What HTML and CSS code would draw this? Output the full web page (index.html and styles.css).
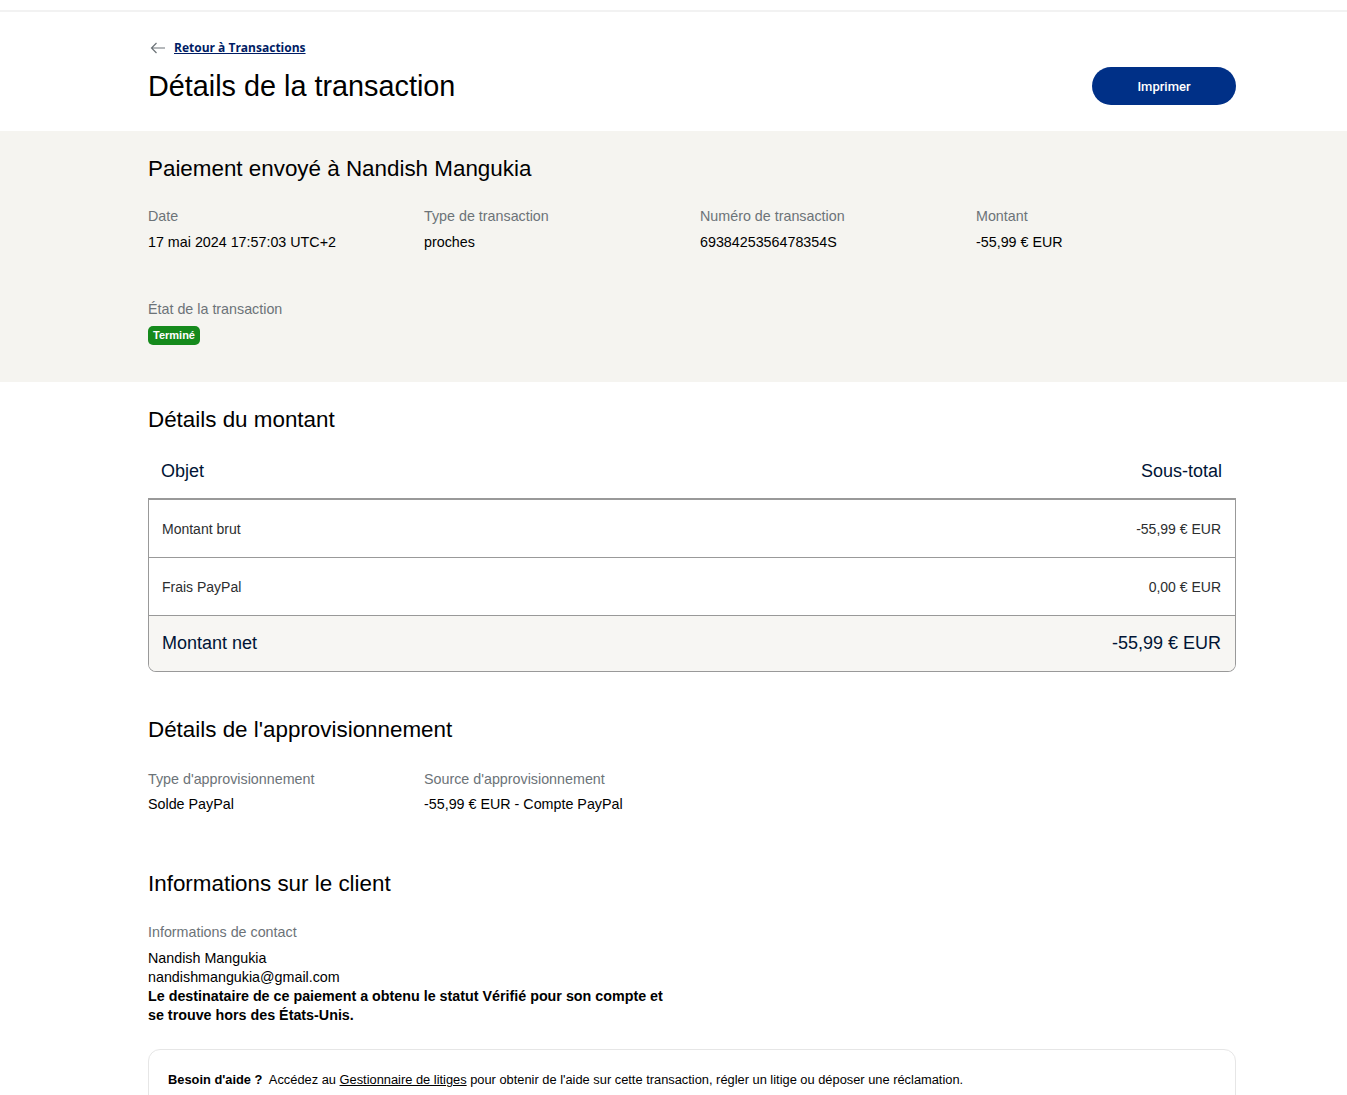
FILE: index.html
```html
<!DOCTYPE html>
<html lang="fr">
<head>
    <meta charset="UTF-8">
    <meta name="viewport" content="width=device-width, initial-scale=1.0">
    <title>Détails de la transaction</title>
    <link rel="stylesheet" href="styles.css">
</head>
<body>
    <div class="topline"></div>

    <header class="page-head">
        <div class="wrap">
            <a class="back" href="#">
                <svg width="16" height="12" viewBox="0 0 16 12" fill="none" stroke="#6c7378" stroke-width="1.2">
                    <path d="M15 6H1.5M6.5 1L1.5 6l5 5"/>
                </svg>
                <span>Retour à Transactions</span>
            </a>
            <div class="title-row">
                <h1>Détails de la transaction</h1>
                <button class="print">Imprimer</button>
            </div>
        </div>
    </header>

    <section class="summary">
        <div class="wrap">
            <h2>Paiement envoyé à Nandish Mangukia</h2>
            <div class="fields">
                <div class="field">
                    <div class="label">Date</div>
                    <div class="value">17 mai 2024 17:57:03 UTC+2</div>
                </div>
                <div class="field">
                    <div class="label">Type de transaction</div>
                    <div class="value">proches</div>
                </div>
                <div class="field">
                    <div class="label">Numéro de transaction</div>
                    <div class="value">6938425356478354S</div>
                </div>
                <div class="field">
                    <div class="label">Montant</div>
                    <div class="value">-55,99 € EUR</div>
                </div>
            </div>
            <div class="status">
                <div class="label">État de la transaction</div>
                <span class="badge">Terminé</span>
            </div>
        </div>
    </section>

    <main class="wrap">
        <section class="amount">
            <h2>Détails du montant</h2>
            <div class="table-head">
                <span>Objet</span>
                <span>Sous-total</span>
            </div>
            <div class="table">
                <div class="row">
                    <span>Montant brut</span>
                    <span>-55,99 € EUR</span>
                </div>
                <div class="row">
                    <span>Frais PayPal</span>
                    <span>0,00 € EUR</span>
                </div>
                <div class="row total">
                    <span>Montant net</span>
                    <span>-55,99 € EUR</span>
                </div>
            </div>
        </section>

        <section class="funding">
            <h2>Détails de l'approvisionnement</h2>
            <div class="fields">
                <div class="field">
                    <div class="label">Type d'approvisionnement</div>
                    <div class="value">Solde PayPal</div>
                </div>
                <div class="field">
                    <div class="label">Source d'approvisionnement</div>
                    <div class="value">-55,99 € EUR - Compte PayPal</div>
                </div>
            </div>
        </section>

        <section class="client">
            <h2>Informations sur le client</h2>
            <div class="label">Informations de contact</div>
            <div class="contact">
                <div>Nandish Mangukia</div>
                <div>nandishmangukia@gmail.com</div>
                <strong>Le destinataire de ce paiement a obtenu le statut Vérifié pour son compte et se trouve hors des États-Unis.</strong>
            </div>
        </section>

        <div class="help">
            <b>Besoin d'aide ?</b>&nbsp; Accédez au <a href="#">Gestionnaire de litiges</a> pour obtenir de l'aide sur cette transaction, régler un litige ou déposer une réclamation.
        </div>
    </main>
</body>
</html>
```

FILE: styles.css
```css
body {
    margin: 0;
    background: #fff;
    color: #000;
    font-family: "Liberation Sans", Arial, sans-serif;
}

.topline {
    height: 10px;
    border-bottom: 2px solid #f2f2f2;
}

.wrap {
    width: 1088px;
    margin-left: 148px;
}

.back {
    display: flex;
    align-items: center;
    gap: 8px;
    margin-top: 27px;
    color: #001c64;
    font-family: "Open Sans", sans-serif;
    font-size: 12px;
    font-weight: 700;
    text-decoration: none;
}

.back svg {
    margin-left: 2px;
}

.back span {
    text-decoration: underline;
}

.title-row {
    display: flex;
    justify-content: space-between;
    align-items: center;
    height: 50px;
    margin-top: 5px;
    padding-bottom: 20px;
}

h1 {
    margin: 0;
    font-size: 28.8px;
    font-weight: 400;
}

.print {
    width: 144px;
    height: 38px;
    border: none;
    border-radius: 19px;
    background: #003087;
    color: #fff;
    font-family: Roboto, sans-serif;
    font-size: 13px;
    font-weight: 500;
}

h2 {
    margin: 0;
    font-size: 22.4px;
    font-weight: 400;
}

.summary {
    background: #f5f4f0;
    padding: 25px 0 37px;
}

.fields {
    display: grid;
    grid-template-columns: repeat(4, 276px);
    margin-top: 24px;
}

.label {
    color: #6c7378;
    font-size: 14.3px;
    line-height: 20px;
}

.value {
    margin-top: 6px;
    font-size: 14.3px;
    line-height: 20px;
}

.status {
    margin-top: 47px;
}

.badge {
    display: inline-block;
    margin-top: 7px;
    padding: 0 5px;
    border-radius: 5px;
    background: #158a1c;
    color: #fff;
    font-size: 11px;
    font-weight: 700;
    line-height: 19px;
}

.amount {
    padding-top: 25px;
}

.table-head {
    display: flex;
    justify-content: space-between;
    height: 37px;
    padding: 28px 14px 0 13px;
    color: #001435;
    font-size: 18px;
}

.table {
    border: 1px solid #999;
    border-top: 2px solid #999;
    border-radius: 0 0 8px 8px;
    overflow: hidden;
}

.row {
    display: flex;
    justify-content: space-between;
    align-items: center;
    height: 57px;
    padding: 0 14px 0 13px;
    border-bottom: 1px solid #999;
    color: #2c2e2f;
    font-size: 14px;
}

.row.total {
    height: 55px;
    border-bottom: none;
    background: #f7f6f3;
    color: #001435;
    font-size: 18px;
}

.funding {
    padding-top: 45px;
}

.funding .fields {
    margin-top: 26px;
}

.funding .value {
    margin-top: 5px;
}

.client {
    padding-top: 57px;
}

.client .label {
    margin-top: 25px;
}

.contact {
    width: 530px;
    margin-top: 7px;
    font-size: 14.3px;
    line-height: 19px;
}

.contact strong {
    display: block;
}

.help {
    margin-top: 24px;
    padding: 22px 19px 30px;
    border: 1px solid #e6e6e6;
    border-radius: 12px;
    font-size: 12.85px;
    color: #000;
}

.help a {
    color: #000;
}
```
